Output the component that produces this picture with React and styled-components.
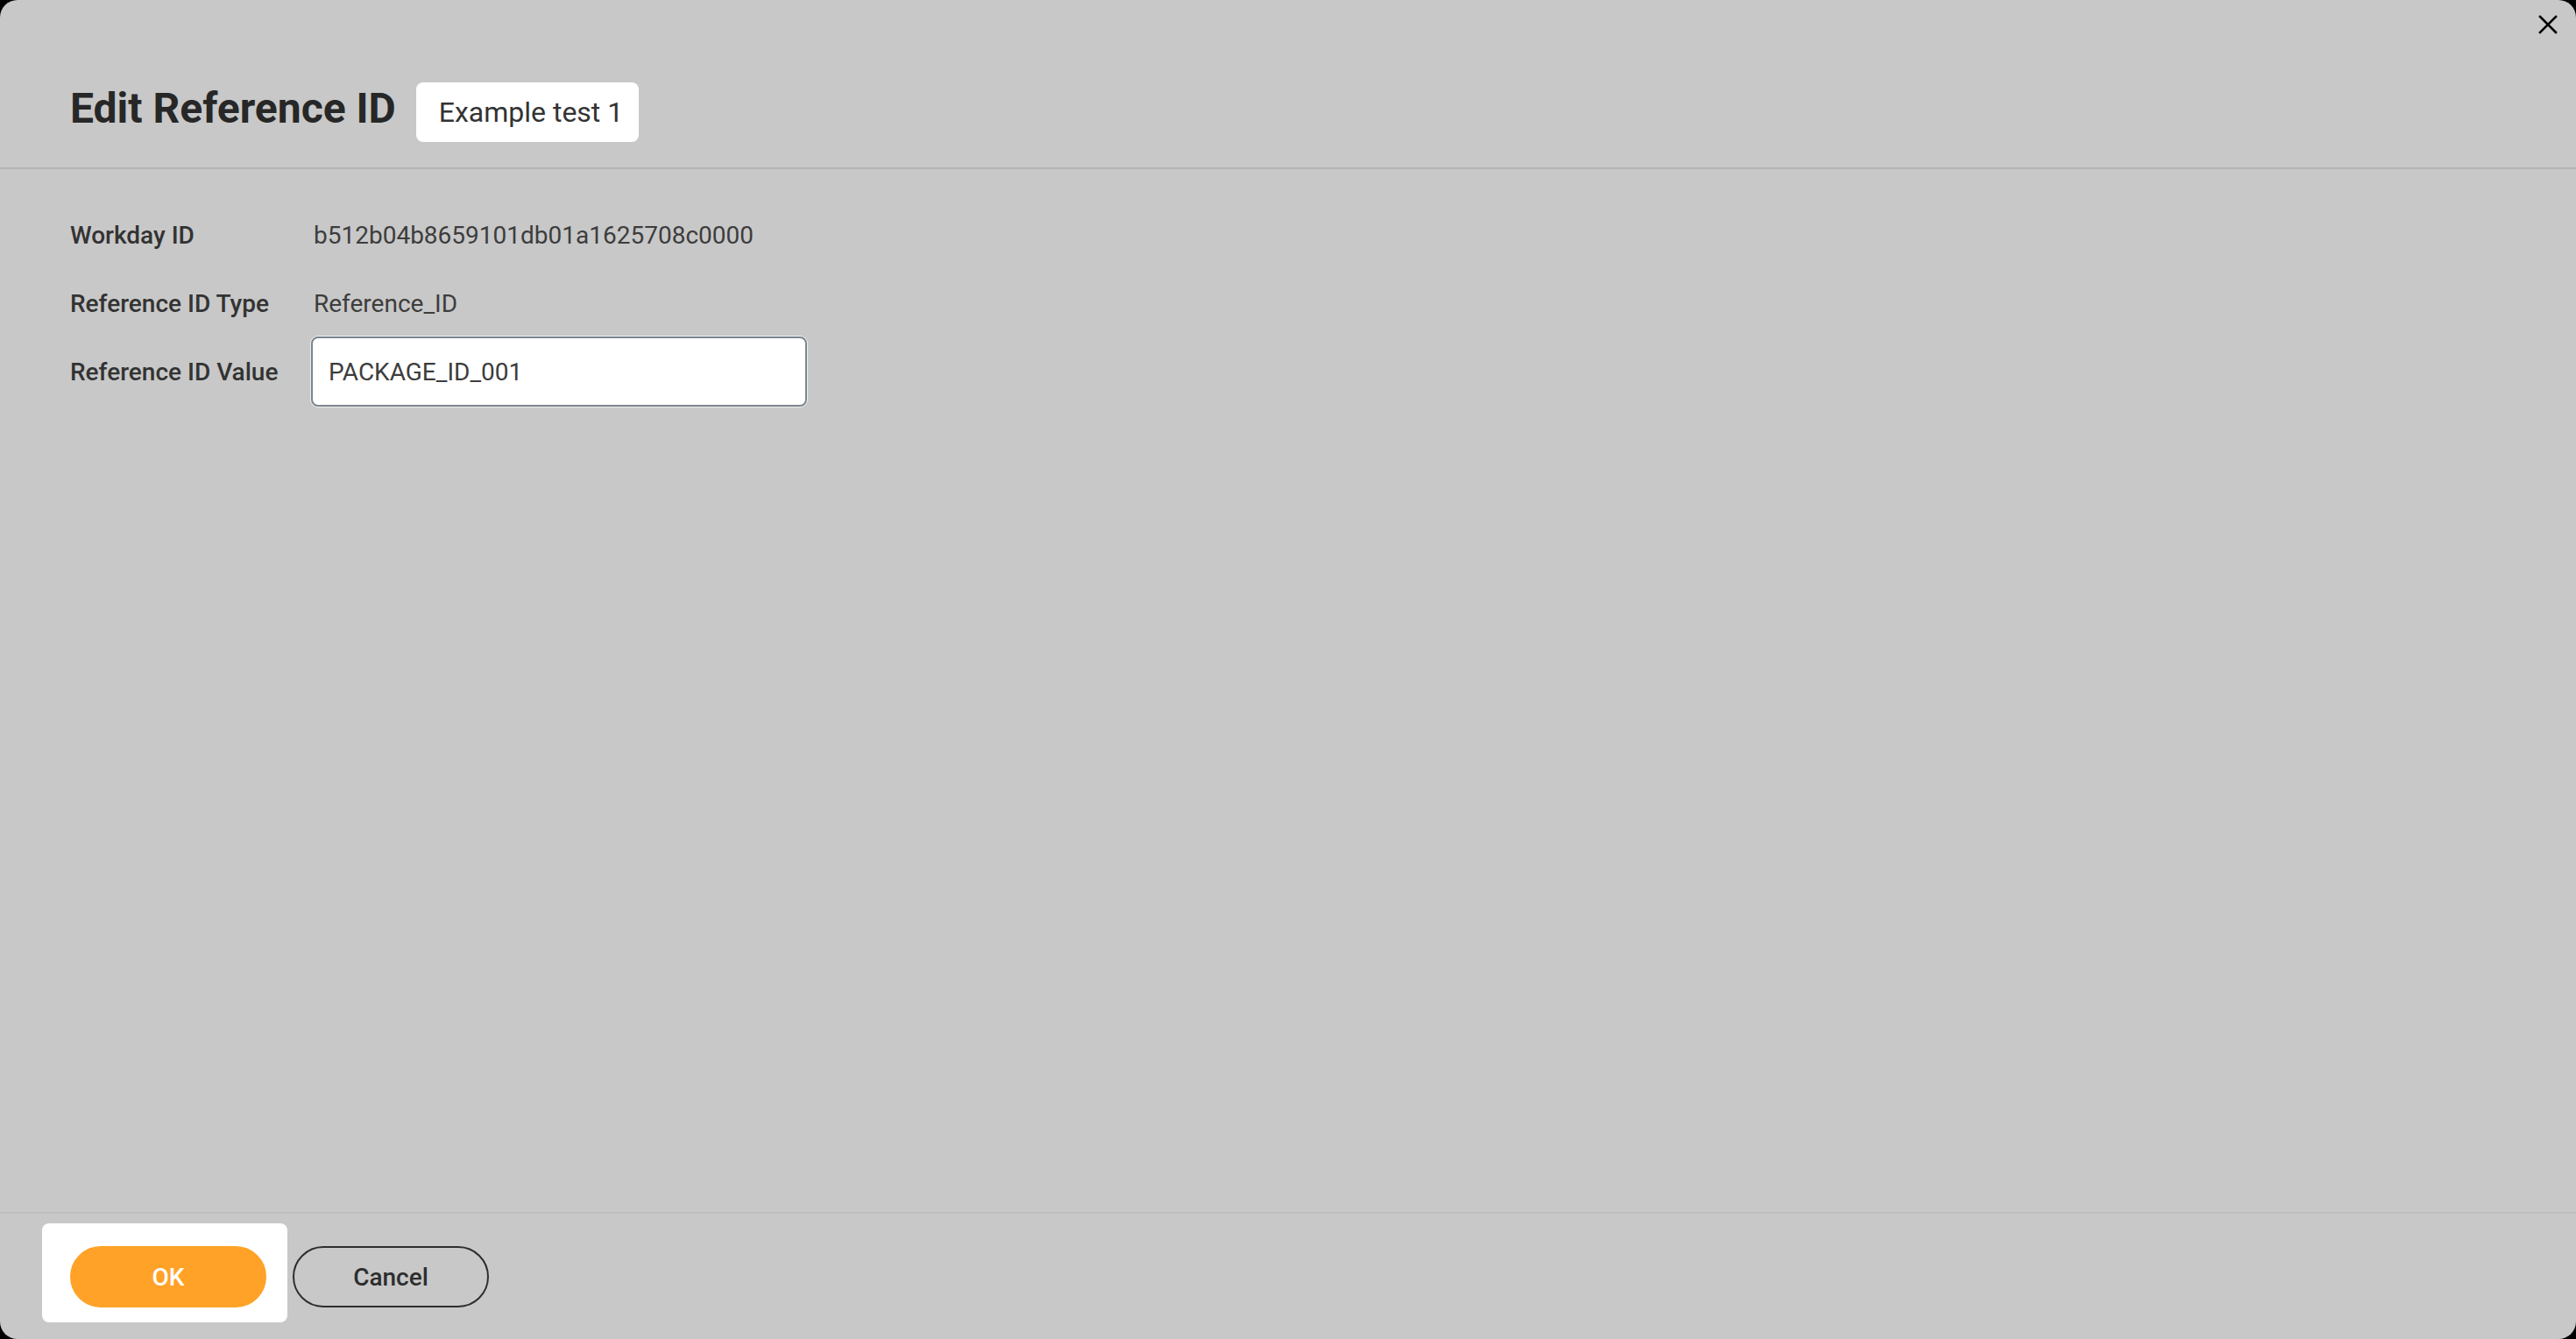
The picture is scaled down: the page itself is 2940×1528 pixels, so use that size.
import React from "react";
import styled, { createGlobalStyle } from "styled-components";

const GlobalStyle = createGlobalStyle`
  html, body {
    margin: 0;
    padding: 0;
    background: #000;
    overflow: hidden;
  }
  * { box-sizing: border-box; }
  #root { width: 100vw; height: 100vh; }
`;

const Dialog = styled.div`
  position: relative;
  width: 100%;
  height: 100%;
  background: #c8c8c8;
  border-radius: 20px;
  overflow: hidden;
  display: flex;
  flex-direction: column;
  font-family: Roboto, "Liberation Sans", sans-serif;
  color: #333;
`;

const CloseButton = styled.button`
  position: absolute;
  top: 14px;
  right: 18px;
  width: 28px;
  height: 28px;
  padding: 0;
  border: none;
  background: transparent;
  display: flex;
  align-items: center;
  justify-content: center;
  cursor: pointer;
`;

const Header = styled.header`
  display: flex;
  align-items: flex-start;
  gap: 23px;
  padding: 94px 80px 29px 80px;
  border-bottom: 2px solid #b4b4b8;
`;

const Title = styled.h1`
  margin: 2px 0 0 0;
  font-size: 48px;
  line-height: 56px;
  font-weight: 700;
  color: #272727;
`;

const Tag = styled.span`
  height: 68px;
  line-height: 68px;
  padding: 0 18px 0 26px;
  background: #fff;
  border-radius: 8px;
  font-size: 32px;
  font-weight: 400;
  color: #333;
`;

const Body = styled.main`
  flex: 1;
  padding: 36px 80px 0 80px;
`;

const Form = styled.div`
  display: grid;
  grid-template-columns: 278px auto;
  grid-auto-rows: 78px;
  align-items: center;
  justify-content: start;
`;

const Label = styled.div`
  font-size: 28px;
  font-weight: 500;
  color: #333;
`;

const Value = styled.div`
  font-size: 28px;
  font-weight: 400;
  color: #3d3d3d;
`;

const TextInput = styled.input`
  width: 566px;
  height: 80px;
  margin-left: -3px;
  padding: 0 18px;
  border: 2px solid #7b858f;
  border-radius: 8px;
  background: #fff;
  box-shadow: 0 0 0 1px rgba(255, 255, 255, 0.7);
  font-family: Roboto, "Liberation Sans", sans-serif;
  font-size: 28px;
  color: #3d3d3d;
  outline: none;
`;

const Footer = styled.footer`
  display: flex;
  align-items: flex-start;
  height: 145px;
  padding: 11px 0 0 48px;
  border-top: 2px solid #bdbdbd;
`;

const Spotlight = styled.div`
  padding: 26px 24px 17px 32px;
  background: #fff;
  border-radius: 8px;
`;

const Button = styled.button`
  width: 224px;
  height: 70px;
  border-radius: 35px;
  font-family: Roboto, "Liberation Sans", sans-serif;
  font-size: 28px;
  font-weight: 500;
  cursor: pointer;
  border: 2px solid ${(p) => (p.$primary ? "#ffa227" : "#2e2e2e")};
  background: ${(p) => (p.$primary ? "#ffa227" : "transparent")};
  color: ${(p) => (p.$primary ? "#fff" : "#2e2e2e")};
  margin: ${(p) => (p.$primary ? "0" : "26px 0 0 6px")};
`;

const rows = [
  { label: "Workday ID", value: "b512b04b8659101db01a1625708c0000" },
  { label: "Reference ID Type", value: "Reference_ID" },
];

export default function App() {
  return (
    <>
      <GlobalStyle />
      <Dialog>
        <CloseButton aria-label="Close">
          <svg width="22" height="22" viewBox="0 0 22 22">
            <path d="M2 2 L20 20 M20 2 L2 20" stroke="#000" strokeWidth="2.6" strokeLinecap="square" />
          </svg>
        </CloseButton>
        <Header>
          <Title>Edit Reference ID</Title>
          <Tag>Example test 1</Tag>
        </Header>
        <Body>
          <Form>
            {rows.map((r) => (
              <React.Fragment key={r.label}>
                <Label>{r.label}</Label>
                <Value>{r.value}</Value>
              </React.Fragment>
            ))}
            <Label>Reference ID Value</Label>
            <TextInput defaultValue="PACKAGE_ID_001" />
          </Form>
        </Body>
        <Footer>
          <Spotlight>
            <Button $primary>OK</Button>
          </Spotlight>
          <Button>Cancel</Button>
        </Footer>
      </Dialog>
    </>
  );
}
